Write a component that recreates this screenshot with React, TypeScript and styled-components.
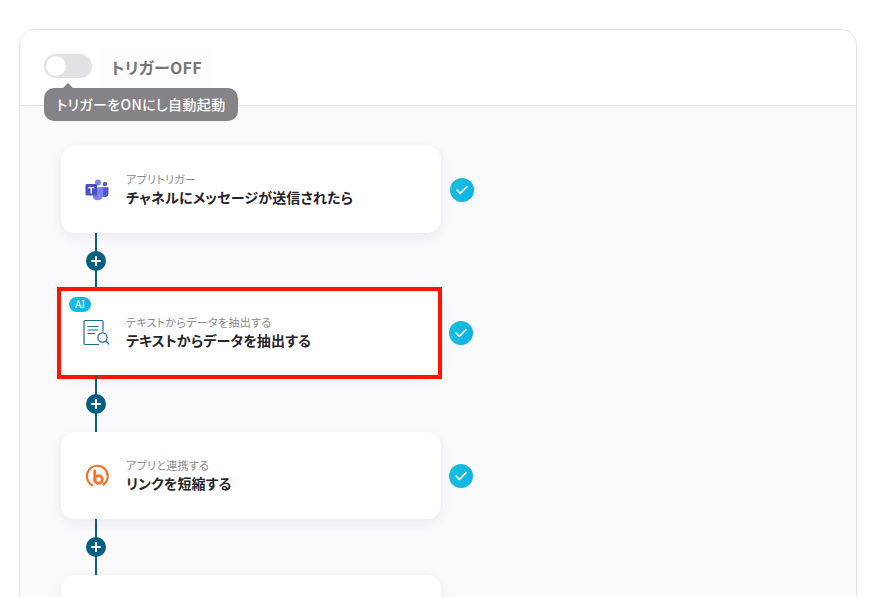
import React from "react";
import styled, { createGlobalStyle } from "styled-components";

const Global = createGlobalStyle`
  html, body { margin: 0; padding: 0; background: #fff; height: 597px; overflow: hidden; }
  body { font-family: "Noto Sans CJK JP", "Noto Sans", sans-serif; font-feature-settings: "palt"; }
`;
const Page = styled.div`
  height: 597px;
  overflow: hidden;
  padding: 29px 12px 0 19px;
  box-sizing: border-box;
`;
const Panel = styled.section`
  height: 640px;
  box-sizing: border-box;
  border: 1px solid #e6e5e9;
  border-radius: 16px;
  overflow: hidden;
  background: #faf9fc;
`;
const Header = styled.header`
  position: relative;
  height: 76px;
  box-sizing: border-box;
  padding: 24px 24px 0;
  display: flex;
  align-items: flex-start;
  gap: 8px;
  background: #fff;
  border-bottom: 1px solid #e6e5e9;
`;
const Toggle = styled.div`
  width: 48px;
  height: 24px;
  border-radius: 12px;
  background: #e2e1e5;
  padding: 2px;
  box-sizing: border-box;
`;
const Knob = styled.div`
  width: 20px;
  height: 20px;
  border-radius: 50%;
  background: #fff;
`;
const TriggerLabel = styled.div`
  height: 40px;
  margin-top: -6px;
  padding: 0 11px;
  border-radius: 10px;
  background: #fefdfe;
  color: #77757b;
  font-size: 16px;
  font-weight: 700;
  letter-spacing: 0.3px;
  line-height: 38px;
`;
const Tooltip = styled.div`
  position: absolute;
  left: 24px;
  top: 58px;
  width: 194px;
  height: 33px;
  border-radius: 10px;
  background: #858387;
  color: #fff;
  font-size: 14px;
  font-weight: 500;
  letter-spacing: 0.35px;
  line-height: 33px;
  text-align: center;
  white-space: nowrap;
  &::before {
    content: "";
    position: absolute;
    left: 18px;
    top: -5px;
    border-left: 6px solid transparent;
    border-right: 6px solid transparent;
    border-bottom: 6px solid #858387;
  }
`;
const Flow = styled.div`
  padding: 40px 0 0 41px;
`;
const StepRow = styled.div`
  position: relative;
  display: flex;
  align-items: center;
  gap: 8px;
`;
const Card = styled.div`
  width: 380px;
  height: 87px;
  box-sizing: border-box;
  padding-left: 21px;
  display: flex;
  align-items: center;
  gap: 15px;
  background: #fff;
  border-radius: 14px;
  box-shadow: 0 4px 12px rgba(40, 30, 70, 0.07);
`;
const IconBox = styled.div`
  width: 29px;
  height: 32px;
  display: flex;
  align-items: center;
  justify-content: center;
  flex: none;
`;
const Texts = styled.div`
  display: flex;
  flex-direction: column;
`;
const Sub = styled.div`
  color: #8b898e;
  font-size: 11px;
  letter-spacing: 0.3px;
  line-height: 16px;
`;
const Title = styled.div`
  color: #26242a;
  font-size: 14px;
  font-weight: 700;
  letter-spacing: 0.15px;
  line-height: 21px;
`;
const Check = styled.div<{ $shift?: number }>`
  width: 24px;
  height: 24px;
  margin-left: ${(p) => p.$shift ?? 0}px;
  border-radius: 50%;
  background: linear-gradient(100deg, #1ac0d8, #0cb2ea);
  display: flex;
  align-items: center;
  justify-content: center;
`;
const Highlight = styled.div`
  position: absolute;
  left: -4px;
  top: -2px;
  width: 385px;
  height: 92px;
  box-sizing: border-box;
  border: 4px solid #ff1400;
  pointer-events: none;
`;
const AiBadge = styled.div`
  position: absolute;
  left: 8px;
  top: 8px;
  width: 22px;
  height: 15px;
  border-radius: 8px;
  background: linear-gradient(100deg, #1ac0d8, #0cb2ea);
  color: #fff;
  font-size: 10px;
  font-family: "Noto Sans", sans-serif;
  line-height: 15px;
  text-align: center;
`;
const Connector = styled.div`
  position: relative;
  width: 2px;
  height: 56px;
  margin-left: 34px;
  background: #065f80;
`;
const Plus = styled.div`
  position: absolute;
  left: -9px;
  top: 18px;
  width: 20px;
  height: 20px;
  border-radius: 50%;
  background: #065f80;
  display: flex;
  align-items: center;
  justify-content: center;
`;

const CheckIcon = ({ shift }: { shift?: number }) => (
  <Check $shift={shift}>
    <svg width="12" height="10" viewBox="0 0 12 10" fill="none">
      <path d="M1 5l3.4 3.4L11 1.6" stroke="#fff" strokeWidth="1.6" strokeLinecap="round" strokeLinejoin="round" />
    </svg>
  </Check>
);
const PlusNode = () => (
  <Connector>
    <Plus>
      <svg width="10" height="10" viewBox="0 0 10 10">
        <path d="M5 1v8M1 5h8" stroke="#fff" strokeWidth="2" strokeLinecap="round" />
      </svg>
    </Plus>
  </Connector>
);
const TeamsIcon = () => (
  <svg width="24" height="22" viewBox="0 0 24 22">
    <circle cx="13" cy="3.6" r="3" fill="#7b83eb" />
    <circle cx="20" cy="5" r="2.2" fill="#5059c9" />
    <path d="M16.5 8.2h6.2c.5 0 .8.4.8.8v5.4a3.7 3.7 0 0 1-6.6 2.4z" fill="#5059c9" />
    <path d="M8 8.2h9.2c.5 0 .9.4.9.9v6.6a5.6 5.6 0 0 1-10.1 3.3z" fill="#7b83eb" />
    <rect x="0.5" y="5" width="11.5" height="11.5" rx="1.2" fill="#4b53bc" />
    <path d="M3.2 7.9h6v1.3H6.9v5.2H5.5V9.2H3.2z" fill="#fff" />
  </svg>
);
const DocIcon = () => (
  <svg width="27" height="28" viewBox="0 0 27 28" fill="none" stroke="#1d6d8c" strokeWidth="1.2">
    <path d="M20 12.5V2.5a1.2 1.2 0 0 0-1-1H2.2a1.2 1.2 0 0 0-1.2 1.2v21.6A1.2 1.2 0 0 0 2.2 25.5H16" />
    <path d="M5 7.5h10M5 11h10M5 14.5h6.5" strokeLinecap="round" />
    <circle cx="19.5" cy="18.5" r="4.6" />
    <path d="M23 22l2.8 3.2" strokeLinecap="round" />
  </svg>
);
const BitlyIcon = () => (
  <svg width="24" height="24" viewBox="0 0 24 24" fill="none" stroke="#f5732c" strokeLinecap="round">
    <path d="M7.2 21.2A10.4 10.4 0 1 1 18.5 20.5" strokeWidth="2.2" />
    <path d="M9.8 7v10" strokeWidth="2.8" />
    <circle cx="13.6" cy="15.5" r="3.8" strokeWidth="2.8" />
  </svg>
);

const Step = ({ icon, sub, title, ai, highlight, shift }: { icon: React.ReactNode; sub: string; title: string; ai?: boolean; highlight?: boolean; shift?: number }) => (
  <StepRow>
    <Card>
      <IconBox>{icon}</IconBox>
      <Texts>
        <Sub>{sub}</Sub>
        <Title>{title}</Title>
      </Texts>
    </Card>
    <CheckIcon shift={shift} />
    {highlight && <Highlight />}
    {ai && <AiBadge>AI</AiBadge>}
  </StepRow>
);

export default function App() {
  return (
    <Page>
      <Global />
      <Panel>
        <Header>
          <Toggle><Knob /></Toggle>
          <TriggerLabel>トリガーOFF</TriggerLabel>
          <Tooltip>トリガーをONにし自動起動</Tooltip>
        </Header>
        <Flow>
          <Step icon={<TeamsIcon />} sub="アプリトリガー" title="チャネルにメッセージが送信されたら" shift={1} />
          <PlusNode />
          <Step icon={<DocIcon />} sub="テキストからデータを抽出する" title="テキストからデータを抽出する" ai highlight />
          <PlusNode />
          <Step icon={<BitlyIcon />} sub="アプリと連携する" title="リンクを短縮する" />
          <PlusNode />
          <Card />
        </Flow>
      </Panel>
    </Page>
  );
}
